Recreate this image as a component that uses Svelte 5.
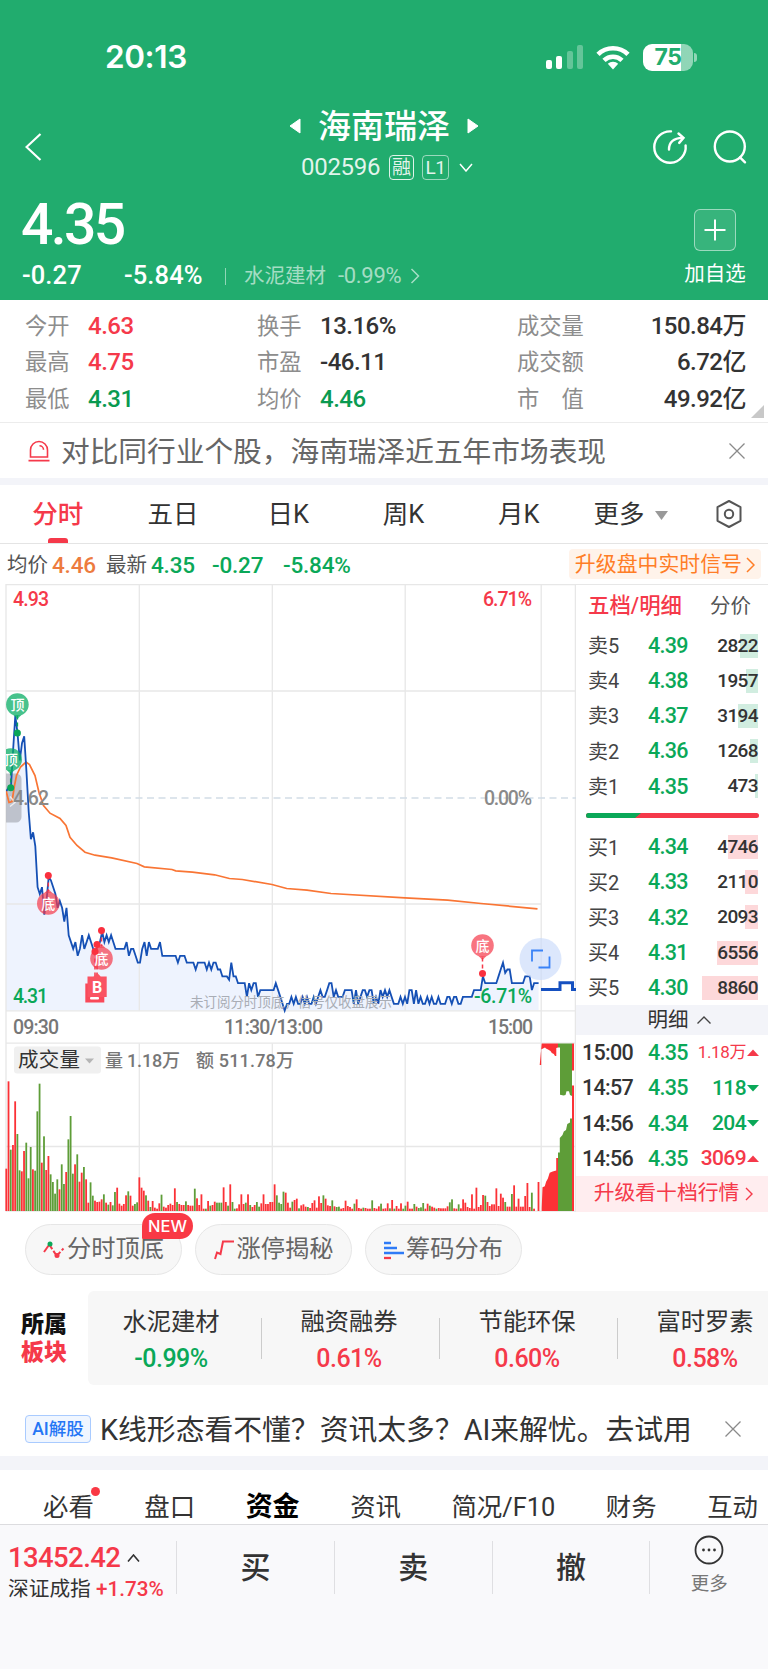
<script>
  const quotes = [
    [
      { label: "今开", value: "4.63", tone: "up" },
      { label: "换手", value: "13.16%" },
      { label: "成交量", value: "150.84万" }
    ],
    [
      { label: "最高", value: "4.75", tone: "up" },
      { label: "市盈", value: "-46.11" },
      { label: "成交额", value: "6.72亿" }
    ],
    [
      { label: "最低", value: "4.31", tone: "deep" },
      { label: "均价", value: "4.46", tone: "deep" },
      { label: "市　值", value: "49.92亿" }
    ]
  ];

  const periods = ["分时", "五日", "日K", "周K", "月K"];

  const asks = [
    { name: "卖5", price: "4.39", qty: 2822, bar: 18 },
    { name: "卖4", price: "4.38", qty: 1957, bar: 12 },
    { name: "卖3", price: "4.37", qty: 3194, bar: 20 },
    { name: "卖2", price: "4.36", qty: 1268, bar: 8 },
    { name: "卖1", price: "4.35", qty: 473, bar: 3 }
  ];
  const bids = [
    { name: "买1", price: "4.34", qty: 4746, bar: 30 },
    { name: "买2", price: "4.33", qty: 2110, bar: 13 },
    { name: "买3", price: "4.32", qty: 2093, bar: 13 },
    { name: "买4", price: "4.31", qty: 6556, bar: 41 },
    { name: "买5", price: "4.30", qty: 8860, bar: 56 }
  ];
  const ticks = [
    { time: "15:00", price: "4.35", qty: "1.18万", dir: "up", small: true },
    { time: "14:57", price: "4.35", qty: "118", dir: "down" },
    { time: "14:56", price: "4.34", qty: "204", dir: "down" },
    { time: "14:56", price: "4.35", qty: "3069", dir: "up" }
  ];

  const boards = [
    { name: "水泥建材", pct: "-0.99%" },
    { name: "融资融券", pct: "0.61%" },
    { name: "节能环保", pct: "0.60%" },
    { name: "富时罗素", pct: "0.58%" }
  ];

  const sections = ["必看", "盘口", "资金", "资讯", "简况/F10", "财务", "互动"];

  // price of every minute, in cents above 4.00
  const minutes = [
    63, 63.5, 63.5, 69, 74, 71.5, 67.5, 70, 71, 66, 60, 56, 57, 55, 49, 48, 49, 45, 47, 50.5, 50, 49, 48, 46, 47,
    46, 44, 46, 42, 41, 40, 41, 39, 40, 42, 40, 41, 42, 41, 40, 39.6, 40.5, 41, 42.5, 41, 42, 41, 42, 41, 40, 40,
    40, 40, 40, 41, 39, 40, 40, 39, 38, 38, 40, 41, 39, 41, 40, 40, 40, 40, 41, 39, 39, 39, 39, 39, 39, 39, 38, 39,
    39, 39, 38, 38, 38, 38, 37, 38, 38, 38, 38, 37, 38, 37, 38, 38, 37, 37, 36, 36, 36, 35.5, 38, 36, 36, 35, 35,
    35, 35, 33, 35, 34, 35, 35, 33, 34, 34, 34, 34, 34, 34, 34, 35, 34, 33, 32, 31, 32, 32, 33, 32, 33, 32, 32, 33,
    32, 33, 32, 32, 33, 32, 33, 34, 33, 33, 34, 35, 35, 33, 34, 33, 33, 33, 34, 34, 34, 34, 32, 34, 32, 33, 34, 34,
    33, 34, 34, 32, 33, 32, 34, 33, 34, 33, 34, 33, 32, 32, 32, 33, 32, 33, 32, 34, 34, 32, 34, 32, 33, 32, 32, 33,
    32, 33, 32, 32, 33, 32, 32, 32, 33, 33, 32, 33, 33, 32, 32, 33, 33, 33, 33, 33, 34, 34, 34, 34, 36, 35, 35, 35,
    35, 35, 35, 36, 37, 38, 36.5, 37, 37, 35, 35, 35, 35, 35, 35, 36, 36, 36, 34, 35, 35, 35
  ];

  // volume of every minute, negative ones are drawn green
  const volumes = [
    127, 389, -184, 198, 329, -231, -122, 119, 180, -205, -98, -192, 125, -121, -299, -382, 145, -224, 123, 165,
    -110, -87, -52, -95, 65, -140, -81, 117, -215, -285, -112, 140, -170, 88, 115, -132, 95, 25, -86, -46, 31, 27,
    28, 35, -50, 25, -19, 27, -17, -57, 70, 22, 16, 21, 47, -59, 46, 16, -21, -26, 101, 70, 61, -47, 31, -12, 30,
    10, 7, 23, -49, 13, 10, 18, 22, 18, 68, -27, 21, 18, 18, -29, 18, 16, 16, -67, 38, 18, 50, 7, -7, 30, -16, 18,
    28, -25, -25, -25, 71, 27, -16, 80, -27, -7, 8, 20, 50, 21, -25, 50, -18, 12, 18, -27, -13, 23, 50, 21, 21, 27,
    27, 80, -47, -25, -21, -58, 55, 25, 10, -28, 33, 37, -8, 17, 20, 13, -12, 9, 24, 32, 10, 44, 24, -47, 37, 17,
    15, -32, 14, -12, -13, 7, 9, 31, 15, 12, 7, -22, 35, 9, 7, -10, 9, 7, 7, -32, 9, 7, 14, -22, 7, 8, 23, -8, 33,
    -7, 15, 7, 23, -7, -16, 28, 7, 7, -21, 13, -9, -11, -24, 7, 22, -16, 13, 10, -7, 9, 8, 8, 8, 14, -26, -35, 8,
    7, -20, 8, 35, 25, 12, 9, 50, 7, 70, 12, 18, 48, -46, 27, 15, 20, 20, 68, 15, 52, 40, -27, 13, 13, -51, 77, 13,
    37, 13, 13, 45, 84, 12, -55, 7, 0, 87
  ];

  const x = (i, count = 240) => 6.4 + (i * 532.2) / count;
  const y = (cents) => 797.5 + (62 - cents) * 6.86;

  const pricePoints = minutes
    .map((c, i) => `${x(i, minutes.length - 1).toFixed(1)},${y(c).toFixed(1)}`)
    .join(" ");
  const areaPoints = `6,1010 ${pricePoints} 538.6,1010`;
  const avgPoints =
    "6,790 9,802 12,801 14.5,785 16.5,775 20.5,766.5 26,761.5 29.5,764 35,775 39,792 43.5,805 50,812.7 60,818 66,825 70,836.7 77,845 85,851.7 95,854.7 111.7,857.3 137,863 144.3,866.3 172,869 175.7,870.3 192.4,871.7 214.6,874.3 229.4,878 242.3,879 272,884 286.7,888 307,889.7 331,893 405,897.3 447.6,899.7 481,903 537.5,908.3";

  let period = "分时";
  let section = "资金";
</script>

{#snippet depthRow(row, side)}
  <div class="depth-row">
    <span class="lv">{row.name}</span>
    <span class="px">{row.price}</span>
    <span class="qty"><i class={side} style="width: {row.bar}px"></i>{row.qty}</span>
  </div>
{/snippet}

{#snippet pin(cx, cy, text, kind, tip)}
  <circle {cx} {cy} r="11.3" class={kind} />
  <path d="M{cx - 4} {cy + tip * 10.6}h8l-4 {tip * 4}z" class={kind} />
  <text x={cx} y={cy + 5.5} text-anchor="middle" class="pin-text">{text}</text>
{/snippet}

<div class="page">
  <header>
    <div class="status">
      <span class="clock">20:13</span>
      <svg class="signal" width="40" height="26" viewBox="0 0 40 26">
        <rect x="1" y="16" width="6" height="9" rx="2" fill="#fff" />
        <rect x="11" y="12" width="6" height="13" rx="2" fill="#fff" />
        <rect x="22" y="7" width="6" height="18" rx="2" fill="#fff" opacity=".3" />
        <rect x="32" y="1" width="6" height="24" rx="2" fill="#fff" opacity=".3" />
      </svg>
      <svg class="wifi" width="34" height="25" viewBox="0 0 34 25" fill="none" stroke="#fff" stroke-width="4.6">
        <path d="M2 9.3a21.5 21.5 0 0 1 30 0" />
        <path d="M8 15.4a13 13 0 0 1 18 0" />
        <path d="M17 24.5l-5.2-5.8a7.6 7.6 0 0 1 10.4 0z" fill="#fff" stroke="none" />
      </svg>
      <span class="battery">75</span>
      <span class="nub"></span>
    </div>

    <div class="title-row">
      <svg class="back" width="17" height="28" viewBox="0 0 17 28" fill="none" stroke="#fff" stroke-width="2.2">
        <path d="M15.5 1L1.5 14l14 13" />
      </svg>
      <div class="title">
        <div class="name">
          <svg width="12" height="16" viewBox="0 0 12 16"><path d="M11 1v14L1 8z" fill="#fff" stroke="#fff" stroke-linejoin="round" /></svg>
          <span>海南瑞泽</span>
          <svg width="12" height="16" viewBox="0 0 12 16"><path d="M1 1v14l10-7z" fill="#fff" stroke="#fff" stroke-linejoin="round" /></svg>
        </div>
        <div class="code">
          <span>002596</span>
          <em>融</em>
          <em class="l1">L1</em>
          <svg width="14" height="9" viewBox="0 0 14 9" fill="none" stroke="#fff" stroke-width="1.5"><path d="M1 1l6 7 6-7" /></svg>
        </div>
      </div>
      <svg class="share" width="36" height="36" viewBox="0 0 36 36" fill="none" stroke="#fff" stroke-width="2.4" stroke-linecap="round">
        <path d="M19 2.4a15.7 15.7 0 1 0 14.6 14" />
        <path d="M17 20.5c0-7 4-11.3 13.5-11.6" />
        <path d="M26.5 4.5l5 4.4-4.3 5" />
      </svg>
      <svg class="search" width="36" height="36" viewBox="0 0 36 36" fill="none" stroke="#fff" stroke-width="2.4" stroke-linecap="round">
        <circle cx="17.8" cy="17.5" r="15" />
        <path d="M28 28.3l5 5" />
      </svg>
    </div>

    <div class="price-row">
      <div class="price-col">
        <div class="price">4.35</div>
        <div class="change">
          <span class="diff">-0.27</span>
          <span class="pct">-5.84%</span>
          <i></i>
          <span class="industry">水泥建材</span>
          <span class="industry-pct">-0.99%</span>
          <svg width="10" height="16" viewBox="0 0 10 16" fill="none" stroke="#fff" stroke-width="1.5" opacity=".6"><path d="M1.5 1l7 7-7 7" /></svg>
        </div>
      </div>
      <div class="add">
        <button type="button" aria-label="加自选">
          <svg width="22" height="22" viewBox="0 0 22 22" stroke="#fff" stroke-width="2"><path d="M11 0.5v21M0.5 11h21" /></svg>
        </button>
        <span>加自选</span>
      </div>
    </div>
  </header>

  <section class="quotes">
    {#each quotes as row}
      <div class="quote-row">
        {#each row as cell}
          <span class="q-label">{cell.label}</span>
          <span class="q-value {cell.tone}">{cell.value}</span>
        {/each}
      </div>
    {/each}
    <svg class="corner" width="13" height="13" viewBox="0 0 13 13"><path d="M13 0v13H0z" fill="#c8c8c8" /></svg>
  </section>

  <section class="notice">
    <svg width="22" height="22" viewBox="0 0 22 22" fill="none" stroke="#f5394a" stroke-width="1.6">
      <path d="M2.5 17V10a8.5 8.5 0 0 1 17 0v7z" />
      <path d="M11.5 5.8a4 4 0 0 1 4 4M0.5 20.6h21" />
    </svg>
    <span>对比同行业个股，海南瑞泽近五年市场表现</span>
    <svg width="16" height="16" viewBox="0 0 16 16" stroke="#8a8a8a" stroke-width="1.3"><path d="M0.5 0.5l15 15M15.5 0.5l-15 15" /></svg>
  </section>

  <nav class="periods">
    {#each periods as item}
      <button type="button" class:active={period === item} on:click={() => (period = item)}>{item}</button>
    {/each}
    <button type="button" class="more">更多<svg width="13" height="9" viewBox="0 0 13 9"><path d="M0 0h13L6.5 9z" fill="#999" /></svg></button>
    <svg class="gear" width="28" height="30" viewBox="0 0 28 30" fill="none" stroke="#555" stroke-width="2">
      <path d="M14 2l11.5 6.2v13.6L14 28 2.5 21.8V8.2z" stroke-linejoin="round" />
      <circle cx="14" cy="15" r="4.2" />
    </svg>
  </nav>

  <section class="info">
    <span>均价</span><b class="avg">4.46</b>
    <span>最新</span><b class="last">4.35</b><b class="last-diff">-0.27</b><b>-5.84%</b>
    <a href="#signal">升级盘中实时信号<svg width="9" height="18" viewBox="0 0 9 18" fill="none" stroke="#ff7d26" stroke-width="1.5"><path d="M1 2l7 7-7 7" /></svg></a>
  </section>

  <section class="market">
    <svg class="chart" width="576" height="629" viewBox="0 583.5 576 629">
      <clipPath id="plot"><rect x="6" y="583" width="570" height="629" /></clipPath>
      <polygon points={areaPoints} fill="#eef3fe" />
      <g stroke="#e7e7e7" stroke-width="1.3" fill="none">
        <path d="M6 584.2H576M6 690.5H576M6 903.5H541M6 1010.3H576M6 1042.7H576M6 1146H576M6 1210.7H576" />
        <path d="M6 583V1211M139.3 583V1010M272.3 583V1010M405.2 583V1010M541.2 583V1211M575.4 583V1211" />
        <path d="M139.3 1043V1211M272.3 1043V1211M405.2 1043V1211" />
      </g>
      <path d="M55 797.5H576" stroke="#d2dde6" stroke-width="1.4" stroke-dasharray="7 4.5" />

      <g clip-path="url(#plot)">
        <path d="M6 773h10a5.5 5.5 0 0 1 5.5 5.5v38a5.5 5.5 0 0 1-5.5 5.5H6z" fill="#aeb2bb" opacity=".75" />
        <polyline points={avgPoints} fill="none" stroke="#f97534" stroke-width="1.7" />
        <polyline points={pricePoints} fill="none" stroke="#1550b5" stroke-width="1.8" />
        <path d="M541 989h19v-6.7h12.5v6.7h4" fill="none" stroke="#1550c0" stroke-width="3" />
        <path d="M10 806l5-4-5-6" fill="none" stroke="#fff" stroke-width="1.5" opacity=".7" />

        <g stroke-width="1.5" stroke-dasharray="4 3">
          <path d="M17.4 715v17M10.7 771v16" stroke="#0aa558" />
          <path d="M48.3 875v16M101.5 930v16M97 944v32M95 951v30M482.5 957v16" stroke="#f5394a" />
        </g>
        {@render pin(17.4, 704, "顶", "top", 1)}
        {@render pin(10.7, 759, "顶", "top", 1)}
        {@render pin(48.3, 903, "底", "bottom", -1)}
        {@render pin(101.5, 958, "底", "bottom", -1)}
        {@render pin(482.5, 945, "底", "bottom", 1)}
        <g fill="#0aa558"><circle cx="17.4" cy="732.5" r="3.5" /><circle cx="10.7" cy="787.2" r="3.5" /></g>
        <g fill="#fa303e">
          <circle cx="48.3" cy="875" r="3.5" /><circle cx="101.5" cy="930" r="3.5" />
          <circle cx="97" cy="944" r="3.5" /><circle cx="95" cy="951" r="3.5" />
          <circle cx="482.5" cy="973" r="3.5" />
        </g>
        <rect x="85.3" y="983" width="19" height="19" fill="#f9495a" />
        <rect x="90" y="996.5" width="9" height="2.5" rx="1" fill="#fff" />
        <path d="M87.5 976h6l3.7-3.5 3.5 3.5h6v20.5h-19.2z" fill="#fa5363" />
        <text x="97.2" y="992.3" text-anchor="middle" class="b-text">B</text>
      </g>

      <g class="axis">
        <text x="13" y="605.5" fill="#f5394a" textLength="36">4.93</text>
        <text x="483" y="605.5" fill="#f5394a" textLength="49">6.71%</text>
        <text x="13" y="804" fill="#8a8a8a" textLength="36">4.62</text>
        <text x="484" y="804" fill="#8a8a8a" textLength="48">0.00%</text>
        <text x="13" y="1002" fill="#0aa858" textLength="35">4.31</text>
        <text x="474" y="1002" fill="#0aa858" textLength="58">-6.71%</text>
        <text x="13" y="1033.5" fill="#777" textLength="46">09:30</text>
        <text x="224" y="1033.5" fill="#777" textLength="99">11:30/13:00</text>
        <text x="488" y="1033.5" fill="#777" textLength="45">15:00</text>
      </g>
      <text x="190" y="1006" class="hint" textLength="202">未订阅分时顶底，信号仅收盘展示</text>

      {#each volumes as v, i}
        <rect x={x(i) - 1} y={1210.5 - Math.abs(v) / 3} width="1.8" height={Math.abs(v) / 3} fill={v < 0 ? "#5e9d38" : "#fb3136"} />
      {/each}

      <!-- closing auction -->
      <path fill="#fb3136" d="M541.7 1210.5v-3l.8-20.8 2.3-1 1.300-4.400 1.800-3.200 1.800-5.800 3-1.300 3.500-1v-12.600h2v53.100z" />
      <path fill="#5e9d38" d="M558 1210.5v-58.500h1.800v-14.500l2.700-3 1.300-3.500 2.200-1.500 1.300-6 2.700-1.500v-4h2v92.500z" />
      <path fill="#fb3136" d="M572 1085h2v125.500h-2zM541.700 1043h16.300v4l-1.700.5v8h-1.300l-1.200-2-2-1-1.300-2-2.500-1.500-2-1-1-1-2 1-1.800 1v15.500h-1.500z" />
      <path fill="#5e9d38" d="M558 1043h14v52.500l-2-1-1-3.700h-2.500l-1 3.700-2 .5-3.500-.7V1047h-2z" />
      <path fill="#fb3136" d="M572 1043h2v27h-2z" />

      <rect x="14" y="1046" width="87" height="27" rx="3" fill="#f0f0f0" />
      <text x="18" y="1066.5" class="vol-name" textLength="62">成交量</text>
      <path d="M85 1058h9l-4.500 5z" fill="#b5b5b5" />
      <text x="105" y="1066" class="vol" textLength="75">量 1.18万</text>
      <text x="196" y="1066" class="vol" textLength="98">额 511.78万</text>

      <circle cx="540.5" cy="958.5" r="21" fill="#c9dafb" opacity=".65" />
      <path d="M532 961v-11h11M538.500 967h11v-11" fill="none" stroke="#3a83f7" stroke-width="1.8" />
    </svg>

    <div class="depth">
      <div class="depth-head"><b>五档/明细</b><span>分价</span></div>
      <div class="levels">
        {#each asks as row}{@render depthRow(row, "sell")}{/each}
      </div>
      <svg class="ratio" width="173" height="5" viewBox="0 0 173 5">
        <rect width="173" height="5" rx="2.5" fill="#f5394a" />
        <path d="M2.5 0H55l-6 5H2.500a2.500 2.500 0 0 1 0-5z" fill="#0aa858" />
      </svg>
      <div class="levels">
        {#each bids as row}{@render depthRow(row, "buy")}{/each}
      </div>
      <div class="detail-head">明细<svg width="14" height="8" viewBox="0 0 14 8" fill="none" stroke="#444" stroke-width="1.4"><path d="M0.5 7.5L7 1l6.5 6.5" /></svg></div>
      <div class="ticks">
        {#each ticks as t}
          <div class="tick">
            <span class="time">{t.time}</span>
            <span class="px">{t.price}</span>
            <span class="vol-qty {t.dir}" class:small={t.small}>{t.qty}</span>
            <svg width="12" height="8" viewBox="0 0 12 8">
              {#if t.dir === "up"}
                <path d="M0 7L6 .5 12 7z" fill="#f5394a" />
              {:else}
                <path d="M0 1l6 6.500L12 1z" fill="#0aa858" />
              {/if}
            </svg>
          </div>
        {/each}
      </div>
      <a class="upgrade" href="#level2">升级看十档行情<svg width="8" height="14" viewBox="0 0 8 14" fill="none" stroke="#f5394a" stroke-width="1.4"><path d="M1 1l6 6-6 6" /></svg></a>
    </div>
  </section>

  <section class="tools">
    <button type="button">
      <svg width="22" height="20" viewBox="0 0 22 20" fill="none" stroke="#f5394a" stroke-width="2">
        <path d="M1 12l5-7" /><path d="M6.5 5l7 10.500M14 15.500l6.500-7" stroke-dasharray="5 2" />
        <circle cx="7" cy="4" r="2.5" fill="#0aa858" stroke="none" /><circle cx="14" cy="15.5" r="2.5" fill="#f5394a" stroke="none" />
      </svg>分时顶底
      <sup>NEW</sup>
    </button>
    <button type="button">
      <svg width="21" height="20" viewBox="0 0 21 20" fill="none" stroke="#f5394a" stroke-width="2"><path d="M1 19l2-6.500 3.500 1.500 2.500-12.500h11" /></svg>涨停揭秘
    </button>
    <button type="button">
      <svg width="20" height="20" viewBox="0 0 20 20" stroke-width="2.3"><path d="M0 3h7M0 8h13M0 13h20" stroke="#2f7bf6" /><path d="M0 18h7" stroke="#f5394a" /></svg>筹码分布
    </button>
  </section>

  <section class="boards">
    <div class="boards-title"><b>所属</b><b class="red">板块</b></div>
    <div class="boards-list">
      {#each boards as b}
        <div class="board">
          <span>{b.name}</span>
          <b class={b.pct.startsWith("-") ? "down" : "up"}>{b.pct}</b>
        </div>
      {/each}
    </div>
  </section>

  <section class="ai">
    <em>AI解股</em>
    <span>K线形态看不懂？资讯太多？AI来解忧。去试用</span>
    <svg width="16" height="16" viewBox="0 0 16 16" stroke="#8a8a8a" stroke-width="1.3"><path d="M0.5 0.5l15 15M15.5 0.5l-15 15" /></svg>
  </section>

  <nav class="sections">
    {#each sections as item, i}
      <button type="button" class:active={section === item} class:dot={i === 0} on:click={() => (section = item)}>{item}</button>
    {/each}
  </nav>

  <footer>
    <div class="index">
      <div><b>13452.42</b><svg width="13" height="8" viewBox="0 0 13 8" fill="none" stroke="#333" stroke-width="1.6"><path d="M1 7.5L6.5 1 12 7.500" /></svg></div>
      <p>深证成指 <b>+1.73%</b></p>
    </div>
    <button type="button" class="deal">买</button>
    <button type="button" class="deal">卖</button>
    <button type="button" class="deal">撤</button>
    <button type="button" class="other">
      <svg width="30" height="30" viewBox="0 0 30 30"><circle cx="15" cy="15" r="13.5" fill="none" stroke="#333" stroke-width="1.8" /><g fill="#333"><circle cx="9.5" cy="15" r="1.4" /><circle cx="15" cy="15" r="1.4" /><circle cx="20.5" cy="15" r="1.4" /></g></svg>
      <span>更多</span>
    </button>
  </footer>
</div>

<style>
  :global(body) {
    background: #fff;
  }

  .page {
    width: 768px;
    height: 1669px;
    overflow: hidden;
    background: #fff;
    color: #333;
    font-family: Roboto, "Noto Sans CJK SC", sans-serif;
    line-height: 1;
    white-space: nowrap;
    display: flex;
    flex-direction: column;
  }

  .page > * {
    flex: none;
    box-sizing: border-box;
  }

  button {
    border: 0;
    padding: 0;
    background: none;
    color: inherit;
    font: inherit;
  }

  a {
    text-decoration: none;
  }

  em,
  i {
    font-style: normal;
  }

  header {
    height: 300px;
    background: #21ac6e;
    color: #fff;
  }

  .status {
    height: 106px;
    box-sizing: border-box;
    padding: 8px 71px 0 105px;
    display: flex;
    align-items: center;
  }

  .clock {
    font: 600 31.5px/1 Inter, sans-serif;
    letter-spacing: -0.4px;
    margin-right: auto;
  }

  .signal {
    margin-right: 11px;
  }

  .wifi {
    margin-right: 13px;
  }

  .battery {
    width: 50px;
    height: 27px;
    border-radius: 9px;
    background: linear-gradient(90deg, #fff 75%, rgba(255, 255, 255, 0.5) 75%);
    color: #21ac6e;
    text-align: center;
    font: 700 23px/27px Inter, sans-serif;
    letter-spacing: -0.5px;
  }

  .nub {
    width: 3px;
    height: 9px;
    margin-left: 1px;
    border-radius: 0 4px 4px 0;
    background: rgba(255, 255, 255, 0.5);
  }

  .title-row {
    height: 82px;
    display: flex;
    align-items: center;
    padding: 0 19px 0 25px;
  }

  .title {
    width: 200px;
    margin-left: 242px;
    margin-right: 168px;
  }

  .name {
    height: 40px;
    display: flex;
    align-items: center;
    justify-content: center;
    gap: 17px;
    font-size: 33px;
    font-weight: 500;
  }

  .code {
    height: 42px;
    display: flex;
    align-items: center;
    padding-left: 17px;
    color: rgba(255, 255, 255, 0.88);
    font-size: 24px;
  }

  .code span {
    width: 88px;
    letter-spacing: -0.3px;
  }

  .code em {
    width: 25px;
    height: 25px;
    box-sizing: border-box;
    margin-right: 8px;
    border: 1.3px solid rgba(255, 255, 255, 0.85);
    border-radius: 4px;
    text-align: center;
    font-size: 19px;
    line-height: 23px;
  }

  .code .l1 {
    width: 27px;
    border-color: rgba(255, 255, 255, 0.55);
    letter-spacing: -0.5px;
    margin-right: 10px;
  }

  .share {
    flex: none;
    margin-right: 24px;
  }

  .search,
  .back {
    flex: none;
  }

  .price-row {
    height: 112px;
    display: flex;
    justify-content: space-between;
    padding: 0 22px;
  }

  .price {
    height: 71px;
    margin-left: -1px;
    font-size: 57px;
    font-weight: 500;
    line-height: 73px;
    letter-spacing: -2.6px;
  }

  .change {
    height: 34px;
    display: flex;
    align-items: center;
    font-size: 25.5px;
  }

  .diff,
  .pct {
    font-weight: 500;
    letter-spacing: 0.1px;
  }

  .diff {
    width: 102px;
  }

  .pct {
    width: 101px;
  }

  .change i {
    width: 1px;
    height: 17px;
    margin-right: 18px;
    background: rgba(255, 255, 255, 0.5);
  }

  .industry {
    width: 94px;
    color: rgba(255, 255, 255, 0.6);
    font-size: 20.5px;
  }

  .industry-pct {
    width: 72px;
    color: rgba(255, 255, 255, 0.6);
    font-size: 22px;
    letter-spacing: -0.3px;
  }

  .add {
    width: 62px;
    padding-top: 21px;
    display: flex;
    flex-direction: column;
    align-items: center;
    gap: 13px;
    font-size: 20.5px;
  }

  .add button {
    width: 42px;
    height: 42px;
    display: grid;
    place-items: center;
    border: 1px solid rgba(255, 255, 255, 0.5);
    border-radius: 6px;
    background: rgba(255, 255, 255, 0.1);
    box-sizing: border-box;
  }

  .quotes {
    height: 123px;
    padding: 7.5px 22px 0 25px;
    border-bottom: 1.5px solid #ececec;
    position: relative;
  }

  .quote-row {
    height: 36.6px;
    display: grid;
    grid-template-columns: 63px 169px 63px 197px 72px 1fr;
    align-items: center;
  }

  .q-label {
    color: #8d8d8d;
    font-size: 22.3px;
  }

  .q-value {
    font-size: 24px;
    font-weight: 500;
    letter-spacing: -0.5px;
  }

  .q-value:last-child {
    text-align: right;
  }

  .up {
    color: #f5394a;
  }

  .down {
    color: #0aa858;
  }

  .deep {
    color: #0a9a50;
  }

  .corner {
    position: absolute;
    right: 4px;
    bottom: 4px;
  }

  .notice {
    height: 55px;
    display: flex;
    align-items: center;
    padding: 0 23px 0 28px;
    color: #666;
    font-size: 28.7px;
  }

  .notice span {
    margin: 3px auto 0 11px;
  }

  .periods {
    height: 66px;
    border-top: 7px solid #f3f4f9;
    border-bottom: 1.5px solid #e4e4e4;
    display: flex;
    align-items: stretch;
    padding-right: 25px;
    color: #333;
    font-size: 25.5px;
  }

  .periods button {
    width: 115.3px;
    padding-top: 2px;
    position: relative;
  }

  .periods .active {
    color: #f5394a;
    font-weight: 500;
  }

  .periods .active::after {
    content: "";
    position: absolute;
    left: 48px;
    bottom: 0;
    width: 20px;
    height: 5px;
    border-radius: 3px 3px 0 0;
    background: #f5394a;
  }

  .periods .more {
    width: auto;
    margin-left: 17px;
    display: flex;
    align-items: center;
    gap: 10px;
  }

  .gear {
    align-self: center;
    margin-left: auto;
  }

  .info {
    height: 39.5px;
    display: flex;
    align-items: center;
    padding: 1px 7px 0;
    color: #555;
    font-size: 20.5px;
  }

  .info > span {
    padding-top: 2px;
  }

  .info b {
    padding-top: 1px;
    font-size: 22.5px;
    font-weight: 500;
    letter-spacing: -0.2px;
    color: #0aa858;
  }

  .info .avg {
    width: 58px;
    padding-left: 4px;
    box-sizing: border-box;
    color: #ed7b3e;
  }

  .info .last {
    width: 65px;
    padding-left: 4px;
    box-sizing: border-box;
  }

  .info .last-diff {
    width: 71px;
  }

  .info a {
    height: 30px;
    margin-left: auto;
    padding: 1px 6px 0;
    box-sizing: border-box;
    border-radius: 4px;
    display: flex;
    align-items: center;
    gap: 4px;
    background: #fff3ea;
    color: #ff7d26;
    font-size: 20.9px;
  }

  .market {
    height: 628.5px;
    display: flex;
  }

  .chart {
    flex: none;
  }

  .axis text {
    font-size: 19.5px;
    font-weight: 500;
  }

  .hint {
    font-size: 13.5px;
    fill: #a9adb5;
  }

  .vol-name {
    font-size: 20.5px;
    fill: #333;
  }

  .vol {
    font-size: 18px;
    font-weight: 500;
    fill: #777;
  }

  .top {
    fill: #0aae66;
    opacity: 0.75;
  }

  .bottom {
    fill: #f5394a;
    opacity: 0.7;
  }

  .pin-text {
    fill: #fff;
    font-size: 14px;
    font-weight: 500;
  }

  .b-text {
    fill: #fff;
    font-size: 16px;
    font-weight: 700;
  }

  .depth {
    flex: 1;
    display: flex;
    flex-direction: column;
    border-top: 1.5px solid #e7e7e7;
    box-sizing: border-box;
  }

  .depth-head {
    height: 43px;
    display: flex;
    align-items: center;
    justify-content: space-between;
    padding: 0 17px 0 12px;
    font-size: 20.5px;
    color: #555;
  }

  .depth-head b {
    color: #f5394a;
    font-weight: 500;
    font-size: 21.4px;
  }

  .depth-row,
  .tick {
    height: 35.2px;
    display: flex;
    align-items: center;
    padding: 1px 10px 0 12px;
    box-sizing: border-box;
  }

  .lv {
    width: 60px;
    padding-top: 1px;
    font-size: 20px;
    color: #444;
  }

  .px {
    width: 56px;
    color: #0aa858;
    font-size: 21.5px;
    font-weight: 500;
    letter-spacing: -0.7px;
  }

  .qty {
    flex: 1;
    position: relative;
    text-align: right;
    font-size: 19px;
    font-weight: 500;
    line-height: 24px;
    letter-spacing: -0.6px;
    z-index: 0;
  }

  .qty i {
    position: absolute;
    top: 0;
    right: 0;
    height: 24px;
    z-index: -1;
  }

  .sell {
    background: #d1ede0;
  }

  .buy {
    background: #fdd8da;
  }

  .ratio {
    margin: 10px 0 10.5px 9.5px;
    flex: none;
  }

  .detail-head {
    height: 30px;
    display: flex;
    align-items: center;
    justify-content: center;
    gap: 8px;
    padding-left: 14px;
    background: #f3f4f9;
    font-size: 20.5px;
  }

  .tick {
    padding: 1px 9px 0 6px;
  }

  .time {
    width: 66px;
    font-size: 21.5px;
    font-weight: 500;
    letter-spacing: -0.7px;
  }

  .vol-qty {
    flex: 1;
    text-align: right;
    font-size: 21px;
    font-weight: 500;
    letter-spacing: -0.6px;
    margin: 0 1px 0 -20px;
  }

  .vol-qty.small {
    font-size: 17px;
    font-weight: 400;
    letter-spacing: -0.4px;
  }

  .upgrade {
    flex: 1;
    display: flex;
    align-items: center;
    justify-content: center;
    gap: 6px;
    padding-left: 3px;
    background: #ffedef;
    color: #f5394a;
    font-size: 20.8px;
  }

  .tools {
    height: 79px;
    padding: 12px 25px 0;
    display: flex;
    gap: 13px;
  }

  .tools button {
    width: 157px;
    height: 51px;
    box-sizing: border-box;
    border: 1px solid #e6e6e6;
    border-radius: 26px;
    background: #f7f7f7;
    color: #666;
    font-size: 24.2px;
    display: flex;
    align-items: center;
    justify-content: center;
    gap: 2px;
    position: relative;
  }

  .tools sup {
    position: absolute;
    right: -12px;
    top: -12px;
    width: 51px;
    height: 26px;
    border-radius: 13px 13px 13px 1px;
    background: #f93945;
    color: #fff;
    font: 500 16.5px/26px Inter, sans-serif;
    text-align: center;
  }

  .boards {
    height: 94px;
    display: flex;
    overflow: hidden;
  }

  .boards-title {
    flex: none;
    width: 88px;
    padding: 22px 0 0 21px;
    box-sizing: border-box;
    display: flex;
    flex-direction: column;
    gap: 4.5px;
    font-size: 23px;
    font-weight: 700;
    color: #111;
  }

  .boards-title .red {
    color: #f5394a;
  }

  .boards-list {
    flex: none;
    width: 712px;
    border-radius: 6px;
    background: #f7f7f7;
    display: flex;
    align-items: center;
  }

  .board {
    width: 178px;
    height: 41px;
    box-sizing: border-box;
    padding: 5px 12px 0 0;
    display: flex;
    flex-direction: column;
    align-items: center;
    justify-content: center;
    gap: 12px;
    font-size: 24.3px;
    position: relative;
  }

  .board:not(:last-child)::after {
    content: "";
    position: absolute;
    right: 4px;
    top: 0;
    width: 1px;
    height: 41px;
    background: #ccc;
  }

  .board b {
    font-size: 25px;
    font-weight: 500;
    letter-spacing: -0.5px;
  }

  .ai {
    height: 71px;
    display: flex;
    align-items: center;
    padding: 17px 27px 0 25px;
    font-size: 28.8px;
  }

  .ai span {
    padding-top: 2px;
  }

  .ai em {
    width: 66px;
    height: 28px;
    box-sizing: border-box;
    margin-right: 9px;
    border: 1px solid #a9cbff;
    border-radius: 4px;
    background: #f0f6ff;
    color: #2676f5;
    text-align: center;
    font-size: 17.5px;
    font-weight: 500;
    line-height: 26px;
  }

  .ai svg {
    margin-left: auto;
  }

  .sections {
    height: 68px;
    border-top: 14px solid #f3f4f9;
    padding: 19px 10px 0 43px;
    display: flex;
    justify-content: space-between;
    align-items: flex-start;
    font-size: 25.4px;
  }

  .sections button {
    height: 37px;
    position: relative;
  }

  .sections .active {
    color: #000;
    font-size: 27px;
    font-weight: 700;
  }

  .sections .dot::after {
    content: "";
    position: absolute;
    right: -6px;
    top: -2px;
    width: 9px;
    height: 9px;
    border-radius: 50%;
    background: #f93945;
  }

  footer {
    height: 145px;
    padding-top: 16px;
    border-top: 1.5px solid #dcdcdf;
    background: #f9f9fb;
    display: flex;
    align-items: flex-start;
  }

  .index {
    width: 176px;
    padding: 1px 0 0 8px;
    box-sizing: border-box;
  }

  .index div {
    display: flex;
    align-items: center;
    gap: 7px;
    height: 31px;
  }

  .index b {
    color: #f5394a;
    font-weight: 500;
  }

  .index div b {
    font-size: 27.5px;
    letter-spacing: -0.6px;
  }

  .index p {
    margin: 6px 0 0;
    font-size: 20.7px;
  }

  .deal {
    width: 157.8px;
    height: 53px;
    border-left: 1.5px solid #dfdfe2;
    box-sizing: border-box;
    font-size: 30px;
    font-weight: 500;
  }

  .other {
    flex: 1;
    height: 53px;
    border-left: 1.5px solid #dfdfe2;
    display: flex;
    flex-direction: column;
    align-items: center;
    gap: 10px;
    color: #777;
    font-size: 18.5px;
  }

  .other svg {
    margin-top: -6px;
    flex: none;
  }
</style>
